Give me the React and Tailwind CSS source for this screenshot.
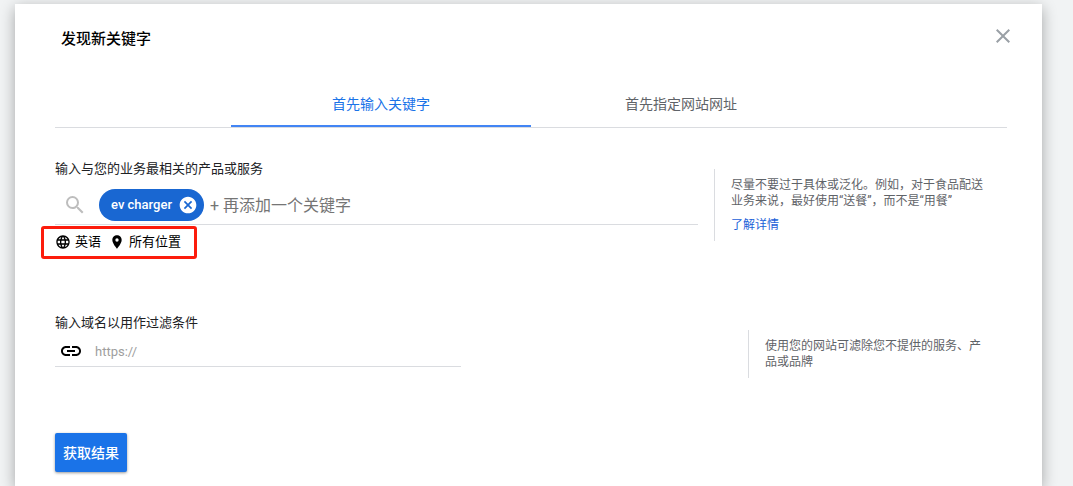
import { useState } from "react";
import {
  MdCancel,
  MdClose,
  MdLanguage,
  MdLink,
  MdLocationOn,
  MdSearch,
} from "react-icons/md";

const tabs = [
  { id: "keywords", label: "首先输入关键字" },
  { id: "website", label: "首先指定网站网址" },
];

function Tabs({ active, onChange }) {
  return (
    <div role="tablist" className="flex justify-center border-b border-[#dadce0]">
      {tabs.map((tab) => (
        <button
          key={tab.id}
          type="button"
          role="tab"
          aria-selected={active === tab.id}
          onClick={() => onChange(tab.id)}
          className={`w-[300px] h-[47px] pt-0.5 border-b-2 text-sm cursor-pointer ${
            active === tab.id
              ? "border-[#4285f4] text-[#1a73e8]"
              : "border-transparent text-[#5f6368]"
          }`}
        >
          {tab.label}
        </button>
      ))}
    </div>
  );
}

function Chip({ text, onRemove }) {
  return (
    <span className="h-8 ml-3 pl-3 pr-1.5 flex shrink-0 items-center gap-1.5 rounded-full bg-[#1967d2] text-white text-[13px] font-medium">
      {text}
      <button type="button" aria-label={`移除 ${text}`} onClick={onRemove} className="cursor-pointer">
        <MdCancel className="size-5" />
      </button>
    </span>
  );
}

function Hint({ children }) {
  return (
    <aside className="py-2 px-4 border-l border-[#dadce0] text-xs leading-4 text-[#5f6368]">
      {children}
    </aside>
  );
}

export default function App() {
  const [active, setActive] = useState("keywords");
  const [keywords, setKeywords] = useState(["ev charger"]);

  const removeKeyword = (keyword) => {
    setKeywords(keywords.filter((k) => k !== keyword));
  };

  return (
    <div className="min-h-screen flex flex-col overflow-hidden pt-1 pl-[15px] pr-[31px] bg-[#f1f3f4] font-[Roboto,'Noto_Sans_CJK_SC',sans-serif] text-[#202124]">
      <main className="grow pl-10 pr-[35px] pb-3 bg-white shadow-[0_4px_14px_rgba(0,0,0,0.32)]">
        {/* Header */}
        <header className="pt-5 pb-[26px] pl-1.5 -mr-2 flex items-start justify-between">
          <h1 className="text-[15px] leading-[30px] font-medium text-black">发现新关键字</h1>
          <button type="button" aria-label="关闭" className="text-[#9aa0a6] cursor-pointer">
            <MdClose className="size-6" />
          </button>
        </header>

        <Tabs active={active} onChange={setActive} />

        <form onSubmit={(e) => e.preventDefault()}>
          {/* Keywords */}
          <div className="mt-[31px] flex items-start gap-4">
            <div className="grow">
              <label htmlFor="keyword" className="block text-[13px] leading-5">
                输入与您的业务最相关的产品或服务
              </label>
              <div className="mt-2.5 pb-[3px] pl-2 flex items-center border-b border-[#dadce0]">
                <MdSearch className="size-6 shrink-0 text-[#bdbdbd]" />
                {keywords.map((keyword) => (
                  <Chip key={keyword} text={keyword} onRemove={() => removeKeyword(keyword)} />
                ))}
                <input
                  id="keyword"
                  type="text"
                  placeholder="+ 再添加一个关键字"
                  className="h-8 ml-1.5 min-w-0 grow text-base outline-none placeholder:text-[#757575]"
                />
              </div>
              <div className="mt-px -ml-3.5 w-fit h-[33px] pl-[11px] pr-[13px] pb-0.5 flex items-center gap-2 rounded-[3px] border-3 border-[#fc1c0c] text-[13px] text-black">
                <button type="button" className="flex items-center gap-1 cursor-pointer">
                  <MdLanguage className="size-4" />
                  英语
                </button>
                <button type="button" className="flex items-center gap-1 cursor-pointer">
                  <MdLocationOn className="size-4" />
                  所有位置
                </button>
              </div>
            </div>
            <div className="w-[293px] shrink-0 mt-2.5">
              <Hint>
                <p>
                  尽量不要过于具体或泛化。例如，对于食品配送业务来说，最好使用“送餐”，而不是“用餐”
                </p>
                <a href="#learn-more" className="mt-2 block text-[#1a5fd8]">
                  了解详情
                </a>
              </Hint>
            </div>
          </div>

          {/* Domain filter */}
          <div className="mt-[54px] flex items-start justify-between">
            <div className="w-[406px]">
              <label htmlFor="domain" className="block text-[13px] leading-5">
                输入域名以用作过滤条件
              </label>
              <div className="mt-1.5 pb-[3px] pl-1 flex items-center gap-3 border-b border-[#dadce0]">
                <MdLink className="size-6 shrink-0 text-black" />
                <input
                  id="domain"
                  type="url"
                  placeholder="https://"
                  className="h-6 min-w-0 grow text-[13px] outline-none placeholder:text-[#9e9e9e]"
                />
              </div>
            </div>
            <div className="w-[259px] shrink-0 mt-[17px]">
              <Hint>使用您的网站可滤除您不提供的服务、产品或品牌</Hint>
            </div>
          </div>

          <button
            type="submit"
            className="mt-[55px] h-[39px] px-2 rounded-xs bg-[#1a73e8] text-white text-sm font-medium shadow-[0_1px_3px_rgba(0,0,0,0.4)] cursor-pointer"
          >
            获取结果
          </button>
        </form>
      </main>
    </div>
  );
}
